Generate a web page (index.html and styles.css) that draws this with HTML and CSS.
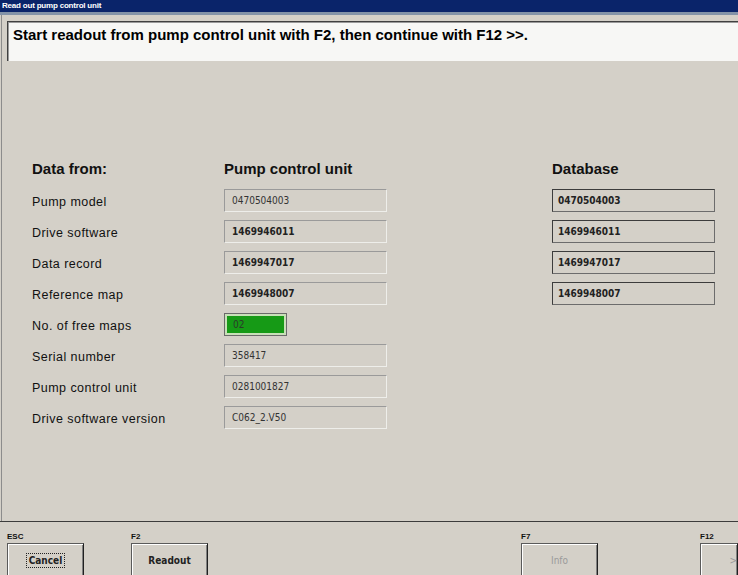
FILE: index.html
```html
<!DOCTYPE html>
<html lang="en">
<head>
    <meta charset="UTF-8">
    <title>Read out pump control unit</title>
    <link rel="stylesheet" href="styles.css">
</head>
<body>
    <div class="titlebar">Read out pump control unit</div>
    <div class="titlestrip"></div>
    <div class="main">
        <div class="instruction">Start readout from pump control unit with F2, then continue with F12 &gt;&gt;.</div>
        <div class="data">
            <div class="head">Data from:</div>
            <div class="head">Pump control unit</div>
            <div></div>
            <div class="head">Database</div>

            <div class="label">Pump model</div>
            <div class="field">0470504003</div>
            <div></div>
            <div class="field db">0470504003</div>

            <div class="label">Drive software</div>
            <div class="field strong">1469946011</div>
            <div></div>
            <div class="field db">1469946011</div>

            <div class="label">Data record</div>
            <div class="field strong">1469947017</div>
            <div></div>
            <div class="field db">1469947017</div>

            <div class="label">Reference map</div>
            <div class="field strong">1469948007</div>
            <div></div>
            <div class="field db">1469948007</div>

            <div class="label">No. of free maps</div>
            <div class="maps"><span>02</span></div>
            <div></div>
            <div></div>

            <div class="label">Serial number</div>
            <div class="field">358417</div>
            <div></div>
            <div></div>

            <div class="label">Pump control unit</div>
            <div class="field">0281001827</div>
            <div></div>
            <div></div>

            <div class="label">Drive software version</div>
            <div class="field">C062_2.V50</div>
            <div></div>
            <div></div>
        </div>
    </div>
    <div class="footer">
        <div class="key">
            <div class="key-name">ESC</div>
            <button class="btn"><span class="focus">Cancel</span></button>
        </div>
        <div class="key">
            <div class="key-name">F2</div>
            <button class="btn">Readout</button>
        </div>
        <div class="key">
            <div class="key-name">F7</div>
            <button class="btn" disabled>Info</button>
        </div>
        <div class="key">
            <div class="key-name">F12</div>
            <button class="btn next" disabled>&gt;</button>
        </div>
    </div>
</body>
</html>
```

FILE: styles.css
```css
html, body {
    margin: 0;
    padding: 0;
}
body {
    width: 738px;
    height: 575px;
    overflow: hidden;
    background: #d4d0c8;
    font-family: "Liberation Sans", Arial, sans-serif;
    color: #111;
}
.titlebar {
    height: 12px;
    line-height: 12px;
    padding-left: 2px;
    background: #0a246a;
    color: #fff;
    font-size: 8px;
    font-weight: bold;
    letter-spacing: -0.2px;
}
.titlestrip {
    height: 3px;
    background: #8393a8;
}
.main {
    height: 506px;
    margin-left: 1px;
    border-left: 1px solid #8c8c8c;
    padding: 6px 0 0 5px;
    box-sizing: border-box;
    background: #d4d0c8;
}
.instruction {
    height: 40px;
    box-sizing: border-box;
    padding: 3px 0 0 5px;
    background: #f7f7f5;
    border-top: 1px solid #404040;
    border-left: 1px solid #404040;
    box-shadow: inset 1px 1px 0 #9a9a9a;
    font-size: 15px;
    font-weight: bold;
    line-height: 19px;
    color: #000;
}
.data {
    margin: 97px 0 0 25px;
    display: grid;
    grid-template-columns: 192px 163px 165px 163px;
    grid-auto-rows: 23px;
    row-gap: 8px;
}
.head {
    font-size: 15px;
    font-weight: bold;
    line-height: 20px;
    align-self: start;
    margin-top: 1px;
}
.label {
    font-size: 12.5px;
    line-height: 23px;
    padding-top: 2px;
    letter-spacing: 0.45px;
}
.field {
    box-sizing: border-box;
    height: 23px;
    padding-left: 7px;
    border-top: 1px solid #9a9a9a;
    border-left: 1px solid #9a9a9a;
    border-right: 1px solid #eeeeea;
    border-bottom: 1px solid #eeeeea;
    font-family: "DejaVu Sans Condensed", "DejaVu Sans", sans-serif;
    font-size: 10px;
    line-height: 21px;
    color: #333;
}
.field.strong {
    font-weight: bold;
    color: #222;
}
.field.db {
    padding-left: 5px;
    border: 1px solid #3c3c3c;
    border-right-color: #6c6c6c;
    border-bottom-color: #6c6c6c;
    font-weight: bold;
    color: #222;
}
.maps {
    width: 63px;
    height: 23px;
    box-sizing: border-box;
    padding: 2px;
    border: 1px solid #6a6a6a;
    background: #c8e0b8;
}
.maps span {
    display: block;
    height: 17px;
    padding-left: 6px;
    background: #169a16;
    font-family: "DejaVu Sans Condensed", "DejaVu Sans", sans-serif;
    font-size: 10px;
    line-height: 17px;
    color: #2a3a2a;
}
.footer {
    height: 54px;
    box-sizing: border-box;
    border-top: 1px solid #3c3c3c;
    padding: 10px 0 0 7px;
    display: grid;
    grid-template-columns: 124px 390px 179px 38px;
}
.key-name {
    font-size: 8px;
    font-weight: bold;
    line-height: 10px;
    margin-bottom: 1px;
    color: #111;
}
.btn {
    width: 77px;
    height: 40px;
    padding: 0 0 4px 0;
    vertical-align: top;
    background: #d4d0c8;
    border: 1px solid #5a5a5a;
    border-right-color: #202020;
    box-shadow: inset 1px 1px 0 #ffffff, inset -1px 0 0 #808080;
    font-family: "DejaVu Sans Condensed", "DejaVu Sans", sans-serif;
    font-size: 10px;
    font-weight: bold;
    line-height: 14px;
    color: #222;
    text-align: center;
    display: block;
}
.btn:disabled {
    color: #9a9a9a;
    font-weight: normal;
}
.btn.next {
    width: 38px;
    text-align: right;
    padding-right: 0;
}
.focus {
    outline: 1px dotted #222;
    padding: 1px 2px;
}
```
